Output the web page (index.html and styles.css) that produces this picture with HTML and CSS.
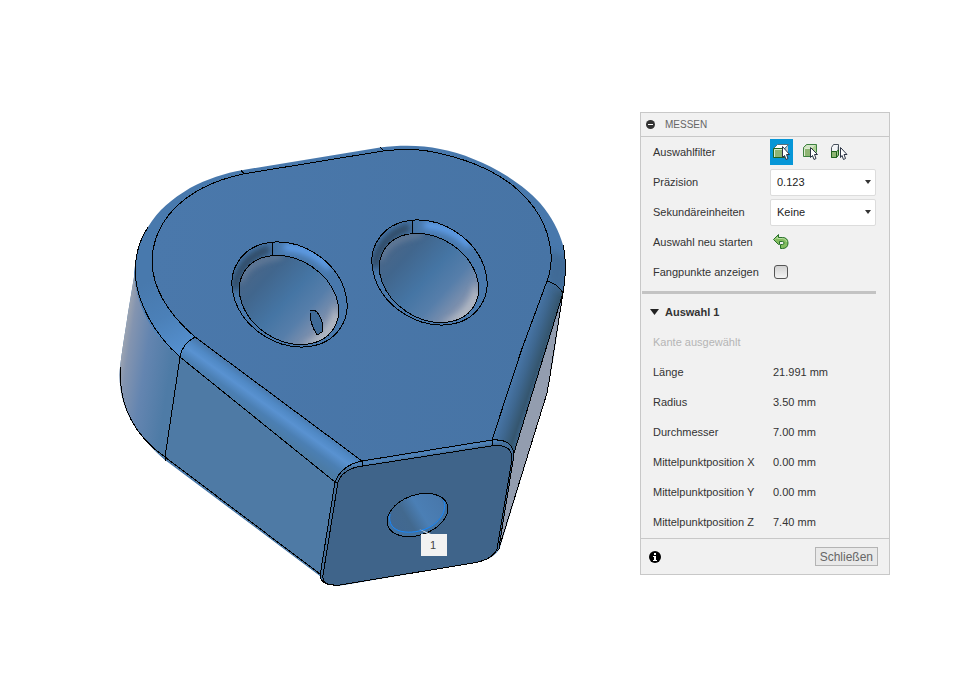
FILE: index.html
```html
<!DOCTYPE html>
<html lang="de">
<head>
<meta charset="utf-8">
<title>Messen</title>
<link rel="stylesheet" href="styles.css">
</head>
<body>
<main class="workspace">
  <svg class="model" viewBox="0 0 640 674" preserveAspectRatio="xMinYMin meet" role="img" aria-label="Modell">
    <defs>
      <linearGradient id="top" gradientUnits="userSpaceOnUse" x1="150" y1="260" x2="550" y2="300"><stop offset="0" stop-color="#4a78ab"/><stop offset="1" stop-color="#4774a5"/></linearGradient>
      <linearGradient id="wall" gradientUnits="userSpaceOnUse" x1="121" y1="350" x2="172" y2="358"><stop offset="0" stop-color="#a0a6b1"/><stop offset=".15" stop-color="#8394b0"/><stop offset=".5" stop-color="#6485b0"/><stop offset="1" stop-color="#4e7ba6"/></linearGradient>
      <linearGradient id="filletL" gradientUnits="userSpaceOnUse" x1="280" y1="399" x2="262" y2="424"><stop offset="0" stop-color="#4978ab"/><stop offset=".22" stop-color="#5089c5"/><stop offset=".42" stop-color="#5992d1"/><stop offset=".72" stop-color="#4b7fb3"/><stop offset="1" stop-color="#4b7ba6"/></linearGradient>
      <linearGradient id="rim" gradientUnits="userSpaceOnUse" x1="186" y1="350" x2="150" y2="280"><stop offset="0" stop-color="#5590cf"/><stop offset=".5" stop-color="#4b80b8"/><stop offset="1" stop-color="#4879ad"/></linearGradient>
      <linearGradient id="filletR" gradientUnits="userSpaceOnUse" x1="517" y1="365" x2="544" y2="374"><stop offset="0" stop-color="#4876a8"/><stop offset=".35" stop-color="#3e678f"/><stop offset=".7" stop-color="#35566f"/><stop offset="1" stop-color="#416f9e"/></linearGradient>
      <linearGradient id="filletB" gradientUnits="userSpaceOnUse" x1="425" y1="450" x2="426" y2="456"><stop offset="0" stop-color="#4876a8"/><stop offset=".5" stop-color="#5084bb"/><stop offset="1" stop-color="#456f9a"/></linearGradient>
      <linearGradient id="bore" gradientUnits="userSpaceOnUse" x1="240" y1="293" x2="339" y2="309"><stop offset="0" stop-color="#49678a"/><stop offset=".18" stop-color="#41668d"/><stop offset=".48" stop-color="#4575a4"/><stop offset=".7" stop-color="#567eaa"/><stop offset=".9" stop-color="#7f91ae"/><stop offset="1" stop-color="#8f9bb0"/></linearGradient>
      <linearGradient id="bore3" gradientUnits="userSpaceOnUse" x1="389" y1="520" x2="447" y2="508"><stop offset="0" stop-color="#416892"/><stop offset=".3" stop-color="#42698f"/><stop offset=".55" stop-color="#4b7fb5"/><stop offset="1" stop-color="#4877aa"/></linearGradient>
      <filter id="soft" x="-40%" y="-40%" width="180%" height="180%"><feGaussianBlur stdDeviation="3"/></filter>
      <clipPath id="ringClip"><ellipse cx="289.500" cy="294.500" rx="61" ry="48.500" transform="rotate(33 289.500 294.500)"/></clipPath>
      <clipPath id="boreClip"><ellipse cx="289" cy="300" rx="53" ry="40.500" transform="rotate(33 289 300)"/></clipPath>
      <clipPath id="body"><path d="M119.500 375 C120 362 124 340 128 313 L134 277 C135 262 137 242 148 227 C158 210 172 199 190 188 C207 179 225 173 243 170 L380 147.500 C400 145 422 145 440 149 C462 153 486 163 507 176 C521 185 531 193 540 203 C552 217 559 231 563 245 C566 257 566 278 563 293 L553 360 L547 393 L500 547 C497 556 486 561 473 563 L343 585 C330 586 323 584 320 576 L165 460 C142 439 120 415 119.500 375Z"/></clipPath>
      <g id="hole">
        <g clip-path="url(#ringClip)">
          <rect x="225" y="235" width="130" height="120" fill="#4878ac"/>
          <path d="M235 290C236 270 250 254 270 249" fill="none" stroke="#2e4a63" stroke-width="9" filter="url(#soft)"/>
          <path d="M284 247C304 248 319 256 330 268" fill="none" stroke="#62a2f0" stroke-width="7" filter="url(#soft)"/>
        </g>
        <ellipse cx="289" cy="300" rx="53" ry="40.500" transform="rotate(33 289 300)" fill="url(#bore)"/>
        <g clip-path="url(#boreClip)">
          <path d="M334 305 C332 323 318 339 300 345 L326 344 L342 320Z" fill="#c4c7ce" opacity=".65" filter="url(#soft)"/>
          <path d="M240 282 C244 267 260 258 282 256" fill="none" stroke="#8292a8" stroke-width="5" opacity=".6" filter="url(#soft)"/>
        </g>
        <g class="edge">
          <ellipse cx="289.500" cy="294.500" rx="61" ry="48.500" transform="rotate(33 289.500 294.500)"/>
          <ellipse cx="289" cy="300" rx="53" ry="40.500" transform="rotate(33 289 300)"/>
          <path d="M272.500 243V256"/>
        </g>
      </g>
    </defs>
    <g clip-path="url(#body)">
      <rect x="110" y="140" width="460" height="450" fill="#4878ac"/>
      <path d="M110 275 L135 273 C137 303 154 334 180 357 L165 460 L110 440Z" fill="url(#wall)"/>
      <path d="M180 357 L335 482 L320 576 L165 459Z" fill="#4e7aa5"/>
      <path d="M134 273 C136 225 180 181 243 172 L152 262 C153 287 172 315 195 337 L180 357 C150 333 137 307 134 273Z" fill="url(#rim)"/>
      <path d="M181 357 C183 348 188 341 195 337 L362 461 C350 463 339 471 335 482Z" fill="url(#filletL)"/>
      <path d="M547 281 Q556 283 563 293 L514 453 C510 442 503 439 492 440 L522 350Z" fill="url(#filletR)"/>
      <path d="M551 250 L570 260 L563 293 L547 281Z" fill="#406b96" filter="url(#soft)"/>
      <path d="M564 292 L514 453 L499 549 L570 393Z" fill="#939daf"/>
      <path d="M335 482 C339 471 350 463 362 461 L492 440 C505 439 513 444 514 455 L498 550 L343 587 L319 580Z" fill="url(#filletB)"/>
      <path d="M338 482 C341 473 351 467 363 466 L491 446 C506 444 512 449 512 459 L497 549 C493 558 484 561 473 563 L340 586 C328 587 322 583 323 575Z" fill="#3f648a"/>
    </g>
    <path d="M383 151 C400 149 419 149 433 152 C464 158 489 168 511 184 C535 203 549 225 551 254 Q552 268 547 281 L521.500 350 L492 440 L362 461 L195 337 C173 318 152 292 152 260 C153 238 162 222 173 210 C191 191 215 180 243 174Z" fill="url(#top)"/>
    <use href="#hole"/>
    <use href="#hole" x="140" y="-22"/>
    <g class="edge">
      <path d="M383 151 C400 149 419 149 433 152 C464 158 489 168 511 184 C535 203 549 225 551 254 Q552 268 547 281 L521.500 350 L492 440 L362 461 L195 337 C173 318 152 292 152 260 C153 238 162 222 173 210 C191 191 215 180 243 174Z"/>
      <path d="M241 170l3 4M380 147l4 4M148 227Q135 247 135 273C137 303 154 334 180 357L335 482M195 337Q182 344 180 357L165 457V461"/>
      <path d="M121 367C117 406 137 438 165 457L320 574M335 482C339 471 350 463 362 461V466M338 482C341 473 351 467 363 466L491 446C506 444 512 449 512 459L497 549C493 558 484 561 473 563L340 585C328 586 322 583 323 575L338 482H335L320 576Q321 584 333 585"/>
      <path d="M492 440V446M492 440C505 439 513 444 514 455L499 547M547 281Q558 284 563 293L514 453M563 245C566 259 566 277 563 293L549 382 547 393 500 545Q500 549 497 551"/>
      <path d="M310 311Q315 308 319 315 325 325 322 332L317 335Q309 322 310 311Z" fill="#3f6a97"/>
    </g>
    <ellipse cx="417.500" cy="515" rx="31.500" ry="20" transform="rotate(-20 417.500 515)" fill="#42719f"/>
    <ellipse cx="416.500" cy="513" rx="28.500" ry="18" transform="rotate(-20 416.500 513)" fill="url(#bore3)"/>
    <path d="M390 514C386 535 413 535 428 528C445 520 449 502 440 496" fill="none" stroke="#1688ff"/>
    <ellipse class="edge" cx="417.500" cy="515" rx="31.500" ry="20" transform="rotate(-20 417.500 515)"/>
    <path d="M419 529L431 534H421V556H447V534H428Z" fill="#f2f2f2"/>
    <text class="pin" x="430" y="549">1</text>
  </svg>

  <section class="panel" aria-labelledby="panel-title">
    <header class="head">
      <svg width="9" height="9" viewBox="0 0 9 9" aria-hidden="true"><circle cx="4.500" cy="4.500" r="4.500" fill="#333"/><path d="M2 4.500H7" stroke="#fff"/></svg>
      <h1 id="panel-title">MESSEN</h1>
    </header>
    <div class="row">
      <span>Auswahlfilter</span>
      <div class="filters">
        <button class="filter active" type="button" aria-label="Fläche, Kante oder Punkt">
          <svg width="17" height="18" viewBox="0 0 17 18"><path d="M.5 5.500L4.500 1.500H15.500L11.500 5.500Z" fill="#fff" stroke="#56707c"/><path d="M12 6L15 2.500V10H12Z" fill="#c0c8cc"/><path d="M.5 5.500H11.500V14.500H.5Z" fill="#8eb573" stroke="#20631c"/><path d="M1.500 14V6.500H11" fill="none" stroke="#dbead0"/><path class="cursor" d="M9.500 3.500V14.500L11.500 12.500L13 16.500L15 15.500L13.500 11.500H16.500Z"/></svg>
        </button>
        <button class="filter" type="button" aria-label="Körper">
          <svg width="17" height="18" viewBox="0 0 17 18"><path d="M1.500 4.500L4.500 1.500H14.500V9L10.500 13.500H1.500Z" fill="#8eb573" stroke="#3d8040"/><path d="M2 4.500L5 2H14L11 5H2Z" fill="#d2e5c5"/><path d="M11 5L14 2V9L11 13Z" fill="#afd295"/><path d="M2.500 13V5.500H10" fill="none" stroke="#dbead0"/><path class="cursor" d="M8.500 4.500V14.500L10.500 12.500L12 16.500L14 15.500L12.500 11.500H15.500Z"/></svg>
        </button>
        <button class="filter" type="button" aria-label="Komponente">
          <svg width="17" height="18" viewBox="0 0 17 18"><path d="M.5 4.500L2.500 1.500H7.500V11.500L5.500 14.500H.5Z" fill="#f4f6f8" stroke="#48505c"/><path d="M6 4L7 3V7L6 8Z" fill="#c3c8cf"/><path d="M.5 8.500H5.500V14.500H.5Z" fill="#8eb573" stroke="#20631c"/><path d="M5.500 8.500L7.500 7V12L5.500 14.500Z" fill="#a9cb91" stroke="#20631c"/><path class="cursor" d="M9.500 4.500V14.500L11 12.500L12.500 16.500L14.500 15.500L13 11.500H16Z"/></svg>
        </button>
      </div>
    </div>
    <div class="row">
      <label for="precision">Präzision</label>
      <div class="drop"><select id="precision"><option>0.123</option></select></div>
    </div>
    <div class="row">
      <label for="units">Sekundäreinheiten</label>
      <div class="drop"><select id="units"><option>Keine</option></select></div>
    </div>
    <div class="row">
      <label for="restart">Auswahl neu starten</label>
      <button class="restart" id="restart" type="button">
        <svg width="16" height="16" viewBox="0 0 16 16" aria-hidden="true"><path d="M.5 5.500L5.500 .5V3.500H9.500C13 3.500 15 5.500 15 9S13 14.500 9.500 14.500H7.500V10.500H9.500Q11 10.500 11 9T9.500 7.500H6.500V10.500H5.500Z" fill="#83bd60" stroke="#27702a"/><path d="M2 5.500L4.500 3V4.500H9.500Q13 4.500 14 8" fill="none" stroke="#b9dea0"/></svg>
      </button>
    </div>
    <div class="row">
      <label for="snap">Fangpunkte anzeigen</label>
      <input class="check" id="snap" type="checkbox">
    </div>
    <hr class="rule">
    <h2 class="group"><svg width="9" height="6" viewBox="0 0 9 6" aria-hidden="true"><path d="M0 0H9L4.500 6Z" fill="#222"/></svg>Auswahl 1</h2>
    <p class="row muted">Kante ausgewählt</p>
    <dl class="values">
      <div class="row"><dt>Länge</dt><dd>21.991 mm</dd></div>
      <div class="row"><dt>Radius</dt><dd>3.50 mm</dd></div>
      <div class="row"><dt>Durchmesser</dt><dd>7.00 mm</dd></div>
      <div class="row"><dt>Mittelpunktposition X</dt><dd>0.00 mm</dd></div>
      <div class="row"><dt>Mittelpunktposition Y</dt><dd>0.00 mm</dd></div>
      <div class="row"><dt>Mittelpunktposition Z</dt><dd>7.40 mm</dd></div>
    </dl>
    <footer class="foot">
      <svg width="12" height="12" viewBox="0 0 12 12" role="img" aria-label="Info"><circle cx="6" cy="6" r="6" fill="#000"/><path d="M5 2H7V4H5ZM4 5H7V9H8V10H4V9H5V6H4Z" fill="#fff"/></svg>
      <button class="close" type="button">Schließen</button>
    </footer>
  </section>
</main>
</body>
</html>
```
FILE: styles.css
```css
* { box-sizing: border-box; }
body {
  margin: 0;
  background: #fff;
  color: #333;
  font: 11px/14px "Liberation Sans", Arial, sans-serif;
}
h1, h2, p, dl, dd { margin: 0; font-size: inherit; }
button { font: inherit; color: inherit; padding: 0; border: 0; background: none; }

.workspace {
  display: grid;
  grid-template-columns: minmax(0, 1fr) 250px;
  align-items: start;
  min-height: 100vh;
  padding-right: 76px;
}
.model { display: block; width: 100%; }
.edge { fill: none; stroke: #000; shape-rendering: crispEdges; }
.pin { font-size: 11px; fill: #444; }

.panel {
  margin-top: 112px;
  border: 1px solid #c8c8c8;
  background: #f1f1f1;
}
.head {
  display: flex;
  align-items: center;
  gap: 10px;
  height: 24px;
  padding-left: 5px;
  border-bottom: 1px solid #c8c8c8;
}
.head h1 { font-size: 10px; font-weight: 400; color: #666; }

.row {
  display: grid;
  grid-template-columns: 117px 1fr;
  align-items: center;
  height: 30px;
  padding: 0 13px 0 12px;
}
.muted { color: #b5b5b5; grid-template-columns: 1fr; }
.values dd { padding-left: 3px; }

.filters { display: flex; gap: 6px; }
.filter {
  display: grid;
  place-items: center;
  width: 23px;
  height: 26px;
}
.filter.active { background: #0696d7; }
.cursor { fill: #fff; stroke: #2b3344; }

.drop { position: relative; }
.drop::after {
  content: "";
  position: absolute;
  right: 5px;
  top: 11px;
  border: 3px solid transparent;
  border-top: 4px solid #333;
  border-bottom: 0;
  pointer-events: none;
}
select {
  display: block;
  appearance: none;
  width: 100%;
  height: 27px;
  padding: 0 6px;
  border: 1px solid #dcdcdc;
  border-radius: 2px;
  background: #fff;
  color: #222;
  font: inherit;
}
.restart { display: block; width: 16px; height: 16px; margin-left: 3px; }
.restart svg { display: block; }
.check {
  appearance: none;
  width: 14px;
  height: 14px;
  margin: 0 0 0 4px;
  border: 1px solid #555;
  border-radius: 3px;
  background: linear-gradient(#d2d2d2, #f4f4f4);
}
.rule {
  height: 3px;
  margin: 4px 13px 3px 1px;
  border: 0;
  background: #c3c3c3;
}
.group {
  display: flex;
  align-items: center;
  gap: 6px;
  height: 30px;
  padding-left: 9px;
}
.foot {
  display: flex;
  align-items: center;
  justify-content: space-between;
  height: 36px;
  margin-top: 1px;
  padding: 0 11px 0 8px;
  border-top: 1px solid #c8c8c8;
}
.close {
  height: 19px;
  padding: 0 4px;
  border: 1px solid #b4b4b4;
  background: #e9e9e9;
  color: #666;
  font-size: 12px;
}
```
